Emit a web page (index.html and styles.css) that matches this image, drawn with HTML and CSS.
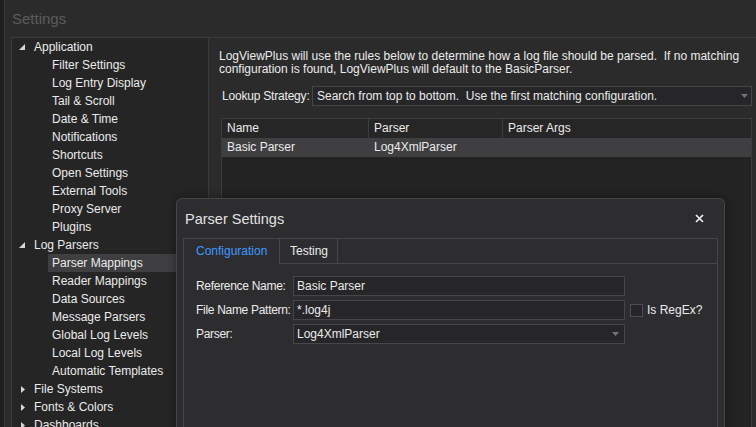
FILE: index.html
```html
<!DOCTYPE html>
<html lang="en">
<head>
    <meta charset="UTF-8">
    <title>Settings</title>
    <link rel="stylesheet" href="styles.css">
</head>
<body>
    <div class="window">
        <div class="window-title">Settings</div>

        <div class="settings-body">
            <!-- settings tree -->
            <ul class="tree">
                <li class="tree-item">
                    <span class="tree-toggle"><svg class="open" width="6" height="6" viewBox="0 0 6 6"><polygon points="6,0 6,6 0,6"/></svg></span>
                    Application
                </li>
                <li class="tree-item child">Filter Settings</li>
                <li class="tree-item child">Log Entry Display</li>
                <li class="tree-item child">Tail &amp; Scroll</li>
                <li class="tree-item child">Date &amp; Time</li>
                <li class="tree-item child">Notifications</li>
                <li class="tree-item child">Shortcuts</li>
                <li class="tree-item child">Open Settings</li>
                <li class="tree-item child">External Tools</li>
                <li class="tree-item child">Proxy Server</li>
                <li class="tree-item child">Plugins</li>
                <li class="tree-item">
                    <span class="tree-toggle"><svg class="open" width="6" height="6" viewBox="0 0 6 6"><polygon points="6,0 6,6 0,6"/></svg></span>
                    Log Parsers
                </li>
                <li class="tree-item child selected">Parser Mappings</li>
                <li class="tree-item child">Reader Mappings</li>
                <li class="tree-item child">Data Sources</li>
                <li class="tree-item child">Message Parsers</li>
                <li class="tree-item child">Global Log Levels</li>
                <li class="tree-item child">Local Log Levels</li>
                <li class="tree-item child">Automatic Templates</li>
                <li class="tree-item">
                    <span class="tree-toggle"><svg class="closed" width="4" height="7" viewBox="0 0 4 7"><polygon points="0,0 4,3.5 0,7"/></svg></span>
                    File Systems
                </li>
                <li class="tree-item">
                    <span class="tree-toggle"><svg class="closed" width="4" height="7" viewBox="0 0 4 7"><polygon points="0,0 4,3.5 0,7"/></svg></span>
                    Fonts &amp; Colors
                </li>
                <li class="tree-item">
                    <span class="tree-toggle"><svg class="closed" width="4" height="7" viewBox="0 0 4 7"><polygon points="0,0 4,3.5 0,7"/></svg></span>
                    Dashboards
                </li>
            </ul>

            <!-- parser mappings page -->
            <div class="page">
                <p class="intro">
                    LogViewPlus will use the rules below to determine how a log file should be parsed.&nbsp; If no matching<br>
                    configuration is found, LogViewPlus will default to the BasicParser.
                </p>
                <div class="lookup">
                    <label class="lookup-label">Lookup Strategy:</label>
                    <div class="combo">
                        <span>Search from top to bottom.&nbsp; Use the first matching configuration.</span>
                        <svg class="combo-arrow" width="7" height="4" viewBox="0 0 7 4"><polygon points="0,0 7,0 3.5,4"/></svg>
                    </div>
                </div>
                <div class="grid">
                    <div class="grid-head">
                        <div class="cell col-name">Name</div>
                        <div class="cell col-parser">Parser</div>
                        <div class="cell col-args">Parser Args</div>
                    </div>
                    <div class="grid-row selected">
                        <div class="cell col-name">Basic Parser</div>
                        <div class="cell col-parser">Log4XmlParser</div>
                        <div class="cell col-args"></div>
                    </div>
                </div>
            </div>
        </div>

        <!-- modal dialog -->
        <div class="dialog">
            <div class="dialog-header">
                <span class="dialog-title">Parser Settings</span>
                <span class="close-button">
                    <svg width="9" height="9" viewBox="0 0 9 9"><path d="M1 1L8 8M8 1L1 8"/></svg>
                </span>
            </div>
            <div class="tabs">
                <div class="tab-strip">
                    <div class="tab tab-config active">Configuration</div>
                    <div class="tab tab-testing">Testing</div>
                </div>
                <div class="tab-page">
                    <div class="form-row">
                        <span class="form-label">Reference Name:</span>
                        <div class="text-input">Basic Parser</div>
                    </div>
                    <div class="form-row">
                        <span class="form-label">File Name Pattern:</span>
                        <div class="text-input">*.log4j</div>
                        <span class="checkbox"></span>
                        <span class="check-label">Is RegEx?</span>
                    </div>
                    <div class="form-row">
                        <span class="form-label">Parser:</span>
                        <div class="text-input combo-input">
                            <span>Log4XmlParser</span>
                            <svg class="combo-arrow" width="7" height="4" viewBox="0 0 7 4"><polygon points="0,0 7,0 3.5,4"/></svg>
                        </div>
                    </div>
                </div>
            </div>
        </div>
    </div>
</body>
</html>
```

FILE: styles.css
```css
:root {
    --border: #3c3c3e;
    --dialog-border: #46464a;
    --input-bg: #262628;
    --selected: #3f3f41;
    --accent: #3d9aff;
}

body {
    margin: 0;
    background: #1f1f1f;
    font-family: 'Liberation Sans', Arial, sans-serif;
    font-size: 12px;
    color: #ebebeb;
    overflow: hidden;
}

.window {
    position: relative;
    margin-left: 4px;
    height: 427px;
    border-left: 1px solid #393939;
    background: #2b2b2b;
    display: flex;
    flex-direction: column;
    overflow: hidden;
}

.window-title {
    flex: none;
    height: 37px;
    line-height: 37px;
    padding-left: 7px;
    font-size: 15px;
    color: #5c5c5c;
}

.settings-body {
    flex: 1;
    min-height: 0;
    display: grid;
    grid-template-columns: 198px 1fr;
    margin-left: 6px;
    border-top: 1px solid var(--border);
}

/* 左侧树 */
.tree {
    list-style: none;
    margin: 0;
    padding: 0;
    background: #252526;
    border-left: 1px solid var(--border);
    border-right: 1px solid var(--border);
}

.tree-item {
    height: 18px;
    display: flex;
    align-items: center;
    padding-left: 6px;
    white-space: nowrap;
}

.tree-item.child {
    margin-left: 36px;
    padding-left: 4px;
}

.tree-item.selected {
    background: var(--selected);
}

.tree-toggle {
    width: 16px;
    display: flex;
    align-items: center;
}

.tree-toggle svg {
    fill: #d8d8d8;
}

.tree-toggle .open {
    margin-left: 1px;
}

.tree-toggle .closed {
    margin-left: 3px;
}

/* 右侧页面 */
.page {
    min-width: 0;
    padding: 12px 4px 0 10px;
    display: flex;
    flex-direction: column;
}

.intro {
    margin: 0;
    line-height: 13px;
    white-space: nowrap;
}

.lookup {
    display: flex;
    align-items: center;
    margin-top: 10px;
}

.lookup-label {
    flex: none;
    width: 90px;
    padding-left: 3px;
    white-space: nowrap;
    letter-spacing: -0.2px;
}

.combo {
    flex: 1;
    height: 20px;
    box-sizing: border-box;
    border: 1px solid var(--dialog-border);
    background: var(--input-bg);
    display: flex;
    align-items: center;
    justify-content: space-between;
    padding: 0 3px 0 4px;
    white-space: nowrap;
}

.combo-arrow {
    fill: #747474;
}

.grid {
    flex: 1;
    margin: 12px 0 0 2px;
    border: 1px solid var(--border);
    border-bottom: none;
    background: #232323;
}

.grid-head,
.grid-row {
    display: flex;
    height: 19px;
    line-height: 19px;
}

.grid-head {
    background: #262626;
}

.grid-head .cell {
    border-right: 1px solid var(--border);
}

.grid-head .col-args {
    border-right: none;
}

.grid-row.selected {
    background: var(--selected);
}

.cell {
    box-sizing: border-box;
    padding-left: 5px;
    white-space: nowrap;
}

.col-name {
    width: 147px;
}

.col-parser {
    width: 134px;
}

.col-args {
    flex: 1;
}

/* 对话框 */
.dialog {
    position: absolute;
    left: 171px;
    top: 198px;
    width: 549px;
    height: 240px;
    box-sizing: border-box;
    padding: 0 6px;
    background: #2d2d30;
    border: 1px solid var(--dialog-border);
    border-bottom: none;
    border-radius: 6px 6px 0 0;
    box-shadow: 0 0 10px rgba(0,0,0,0.4);
}

.dialog-header {
    height: 39px;
    display: flex;
    align-items: center;
    justify-content: space-between;
    padding: 0 9px 0 2px;
}

.dialog-title {
    font-size: 14.5px;
    color: #e2e2e2;
}

.close-button {
    width: 20px;
    height: 20px;
    display: flex;
    align-items: center;
    justify-content: center;
}

.close-button svg {
    stroke: #f0f0f0;
    stroke-width: 1.7;
}

.tabs {
    height: 200px;
    border: 1px solid var(--dialog-border);
    border-bottom: none;
}

.tab-strip {
    display: flex;
    height: 24px;
    border-bottom: 1px solid var(--dialog-border);
}

.tab {
    box-sizing: border-box;
    line-height: 24px;
    border-right: 1px solid var(--dialog-border);
}

.tab-config {
    width: 96px;
    padding-left: 12px;
}

.tab-testing {
    width: 58px;
    padding-left: 10px;
}

.tab.active {
    height: 25px;
    margin-bottom: -1px;
    background: #2d2d30;
    color: var(--accent);
}

.tab-page {
    padding: 12px 0 0 12px;
}

.form-row {
    display: flex;
    align-items: center;
    height: 20px;
    margin-bottom: 4px;
    white-space: nowrap;
}

.form-label {
    flex: none;
    width: 97px;
    letter-spacing: -0.3px;
}

.text-input {
    flex: none;
    width: 332px;
    height: 20px;
    box-sizing: border-box;
    border: 1px solid var(--dialog-border);
    background: var(--input-bg);
    padding: 0 3px;
    display: flex;
    align-items: center;
}

.combo-input {
    justify-content: space-between;
    padding-right: 5px;
}

.checkbox {
    flex: none;
    width: 13px;
    height: 13px;
    box-sizing: border-box;
    margin-left: 5px;
    border: 1px solid #4e4e52;
    background: var(--input-bg);
}

.check-label {
    margin-left: 4px;
}
```
